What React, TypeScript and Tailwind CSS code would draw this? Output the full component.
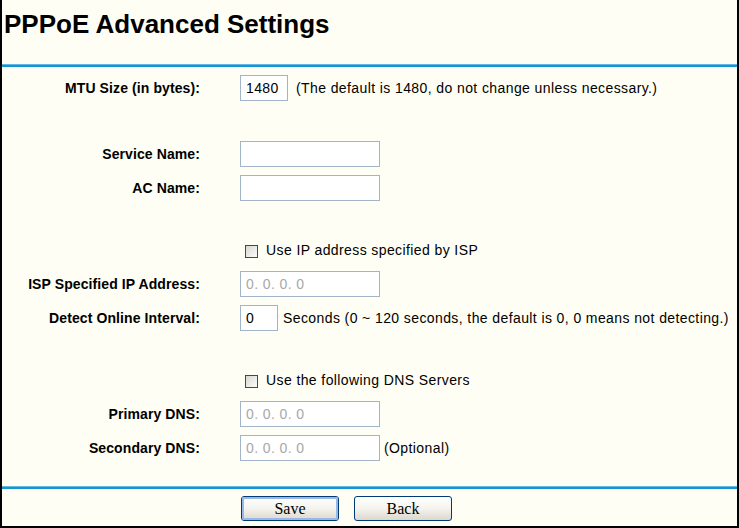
import React from "react"

const label = "w-[198px] shrink-0 text-right font-bold text-[14px] tracking-[0.1px] leading-none text-black"
const inputBox =
  "h-[26px] border border-[#a2b5c8] bg-white flex items-center pl-[5px] text-[14px] tracking-[0.4px] leading-none"
const text = "text-[14px] tracking-[0.4px] leading-none text-black"

function Row({ name, className = "", children }: { name?: string; className?: string; children: React.ReactNode }) {
  return (
    <div className={`flex items-center ${className}`}>
      <div className={label}>{name}</div>
      <div className="ml-[40px] flex items-center">{children}</div>
    </div>
  )
}

function Check({ children }: { children: React.ReactNode }) {
  return (
    <div className="flex items-center h-[20px]">
      <span className="ml-[5px] mt-[3px] w-[13px] h-[13px] border border-[#1c5180] bg-gradient-to-br from-[#d8d8d2] to-[#fbfbf9]" />
      <span className={`ml-[8px] ${text}`}>{children}</span>
    </div>
  )
}

function BlueLine() {
  return (
    <div>
      <div className="h-px bg-[#61b8e3]" />
      <div className="h-[2px] bg-[#1795d3]" />
    </div>
  )
}

function XpButton({ children, focused }: { children: React.ReactNode; focused?: boolean }) {
  return (
    <button className="w-[98px] h-[25px] rounded-[3px] border border-[#003c74] bg-gradient-to-b from-[#ffffff] via-[#f4f3ee] to-[#dcd8cc] p-0">
      <span
        className={`flex items-center justify-center w-full h-full rounded-[2px] font-['Liberation_Serif',serif] text-[16px] leading-none text-black ${
          focused ? "border-2 border-[#9bb7e6]" : ""
        }`}
      >
        {children}
      </span>
    </button>
  )
}

export default function App() {
  return (
    <div className="w-[739px] h-[528px] bg-[#fefef4] border-l-2 border-r-2 border-b-2 border-black flex flex-col font-['Liberation_Sans',Arial,sans-serif] overflow-hidden">
      <div className="h-[64px] pt-[11px] pl-[2px]">
        <h1 className="text-[26px] leading-[26px] font-bold text-black">PPPoE Advanced Settings</h1>
      </div>
      <BlueLine />

      <Row name="MTU Size (in bytes):" className="mt-[8px]">
        <div className={`${inputBox} w-[48px]`}>1480</div>
        <span className={`ml-[8px] ${text}`}>(The default is 1480, do not change unless necessary.)</span>
      </Row>

      <Row name="Service Name:" className="mt-[40px]">
        <div className={`${inputBox} w-[140px]`} />
      </Row>
      <Row name="AC Name:" className="mt-[8px]">
        <div className={`${inputBox} w-[140px]`} />
      </Row>

      <Row className="mt-[39px]">
        <Check>Use IP address specified by ISP</Check>
      </Row>
      <Row name="ISP Specified IP Address:" className="mt-[11px]">
        <div className={`${inputBox} w-[140px] text-[#a8a8a8]`}>0. 0. 0. 0</div>
      </Row>
      <Row name="Detect Online Interval:" className="mt-[8px]">
        <div className={`${inputBox} w-[38px]`}>0</div>
        <span className={`ml-[5px] ${text}`}>
          Seconds (0 ~ 120 seconds, the default is 0, 0 means not detecting.)
        </span>
      </Row>

      <Row className="mt-[39px]">
        <Check>Use the following DNS Servers</Check>
      </Row>
      <Row name="Primary DNS:" className="mt-[11px]">
        <div className={`${inputBox} w-[140px] text-[#a8a8a8]`}>0. 0. 0. 0</div>
      </Row>
      <Row name="Secondary DNS:" className="mt-[8px]">
        <div className={`${inputBox} w-[140px] text-[#a8a8a8]`}>0. 0. 0. 0</div>
        <span className={`ml-[4px] ${text}`}>(Optional)</span>
      </Row>

      <div className="mt-[25px]">
        <BlueLine />
      </div>
      <div className="mt-[7px] ml-[239px] flex gap-[15px]">
        <XpButton focused>Save</XpButton>
        <XpButton>Back</XpButton>
      </div>
    </div>
  )
}
